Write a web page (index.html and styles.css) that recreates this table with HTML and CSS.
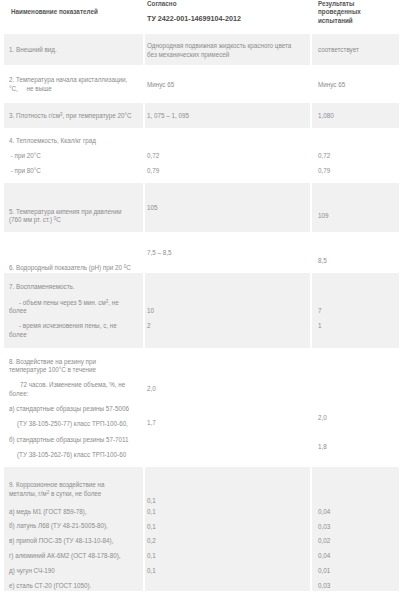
FILE: index.html
```html
<!DOCTYPE html>
<html lang="ru">
<head>
<meta charset="utf-8">
<title>Показатели</title>
<link rel="stylesheet" href="styles.css">
</head>
<body>
<table class="spec">
  <colgroup><col class="w1"><col class="w2"><col class="w3"></colgroup>
  <thead>
    <tr class="head">
      <th class="c1"><p>Наименование показателей</p></th>
      <th class="c2"><p>Согласно</p><p class="tu">ТУ 2422-001-14699104-2012</p></th>
      <th class="c3"><p>Результаты<br>проведенных<br>испытаний</p></th>
    </tr>
  </thead>
  <tbody>
    <tr class="r1 odd">
      <td class="c1"><p>1. Внешний вид.</p></td>
      <td class="c2"><p>Однородная подвижная жидкость красного цвета<br>без механических примесей</p></td>
      <td class="c3"><p>соответствует</p></td>
    </tr>
    <tr class="r2">
      <td class="c1"><p>2. Температура начала кристаллизации,<br>°С,&nbsp;&nbsp;&nbsp;&nbsp; не выше</p></td>
      <td class="c2"><p>Минус 65</p></td>
      <td class="c3"><p>Минус 65</p></td>
    </tr>
    <tr class="r3 odd">
      <td class="c1"><p>3. Плотность г/см<sup>3</sup>, при температуре 20°С</p></td>
      <td class="c2"><p>1, 075 – 1, 095</p></td>
      <td class="c3"><p>1,080</p></td>
    </tr>
    <tr class="r4">
      <td class="c1"><p>4. Теплоемкость, Ккал/кг град</p><p>&nbsp;- при 20°С</p><p>&nbsp;- при 80°С</p></td>
      <td class="c2"><p>&nbsp;</p><p>0,72</p><p>0,79</p></td>
      <td class="c3"><p>&nbsp;</p><p>0,72</p><p>0,79</p></td>
    </tr>
    <tr class="r5 odd">
      <td class="c1"><p>&nbsp;</p><p>5. Температура кипения при давлении<br>(760 мм рт. ст.) <sup>0</sup>С</p></td>
      <td class="c2"><p>105</p></td>
      <td class="c3"><p>&nbsp;</p><p>109</p></td>
    </tr>
    <tr class="r6">
      <td class="c1"><p>&nbsp;</p><p>&nbsp;</p><p>6. Водородный показатель (рН) при 20 <sup>0</sup>С</p></td>
      <td class="c2"><p>7,5 – 8,5</p></td>
      <td class="c3"><p>&nbsp;</p><p>8,5</p></td>
    </tr>
    <tr class="r7 odd">
      <td class="c1"><p>7. Воспламеняемость.</p><p class="ind">- объем пены через 5 мин. см<sup>3</sup>, не<br>более</p><p class="ind">- время исчезновения пены, с, не<br>более</p></td>
      <td class="c2"><p>&nbsp;</p><p>10</p><p>2</p></td>
      <td class="c3"><p>&nbsp;</p><p>7</p><p>1</p></td>
    </tr>
    <tr class="r8">
      <td class="c1"><p>8. Воздействие на резину при<br>температуре 100°С в течение</p><p class="ind-l">72 часов. Изменение объема, %, не<br>более:</p><p>а) стандартные образцы резины 57-5006</p><p class="ind-s">(ТУ 38-105-250-77) класс ТРП-100-60,</p><p>б) стандартные образцы резины 57-7011</p><p class="ind-s">(ТУ 38-105-262-76) класс ТРП-100-60</p></td>
      <td class="c2"><p>2,0</p><p>1,7</p></td>
      <td class="c3"><p>2,0</p><p>1,8</p></td>
    </tr>
    <tr class="r9 odd">
      <td class="c1"><p>9. Коррозионное воздействие на<br>металлы, г/м<sup>2</sup> в сутки, не более</p><p class="lead-gap">а) медь М1 (ГОСТ 859-78),</p><p>б) латунь Л68 (ТУ 48-21-5005-80),</p><p>в) припой ПОС-35 (ТУ 48-13-10-84),</p><p>г) алюминий АК-6М2 (ОСТ 48-178-80),</p><p>д) чугун СЧ-190</p><p>е) сталь СТ-20 (ГОСТ 1050).</p></td>
      <td class="c2"><p>0,1</p><p class="tight">0,1</p><p>0,1</p><p>0,2</p><p>0,1</p><p>0,1</p></td>
      <td class="c3"><p>0,04</p><p>0,03</p><p>0,02</p><p>0,04</p><p>0,01</p><p>0,03</p></td>
    </tr>
  </tbody>
</table>
</body>
</html>
```
FILE: styles.css
```css
* { box-sizing: border-box; }

body {
  margin: 0;
  background: #ffffff;
  font-family: "Liberation Sans", Arial, sans-serif;
}

.spec {
  margin: 0 0 0 4px;
  width: 395px;
  table-layout: fixed;
  border-collapse: separate;
  border-spacing: 0;
  font-size: 6.3px;
  line-height: 8.6px;
  color: #8c8c8c;
}

.w1 { width: 139px; }
.w2 { width: 167px; }
.w3 { width: 89px; }

.spec p {
  margin: 0;
  white-space: nowrap;
}

.spec p + p { margin-top: 6.6px; }

.spec sup {
  font-size: 70%;
  line-height: 0;
  vertical-align: 0.45em;
}

.spec th {
  vertical-align: top;
  text-align: left;
  font-weight: bold;
  color: #555555;
  line-height: 8.4px;
  padding: 0;
}

.spec td {
  vertical-align: middle;
  padding: 2px 0 0;
}

.spec .c2,
.spec .c3 { border-left: 2px solid #ffffff; }

.spec td.c1 { padding-left: 5px; }
.spec td.c2 { padding-left: 2px; }
.spec td.c3 { padding-left: 6px; }

.spec th.c1 { padding: 7.8px 0 0 7px; }
.spec th.c2 { padding: 0 0 0 2px; }
.spec th.c3 { padding: 0 0 0 6px; }

.spec th .tu {
  font-size: 7.2px;
  margin-top: 6.6px;
  color: #4a4a4a;
}

.odd td { background: #f1f1f1; }

.head { height: 34px; }
.r1 { height: 31px; }
.r2 { height: 38px; }
.r3 { height: 25px; }
.r4 { height: 55px; }
.r5 { height: 49px; }
.r6 { height: 40px; }
.r7 { height: 75px; }
.r8 { height: 119px; }
.r9 { height: 123px; }

.ind { text-indent: 10px; }
.ind-l { text-indent: 11px; }
.ind-s { text-indent: 8px; }

.spec .r8 td.c2 { vertical-align: top; padding-top: 37px; }
.spec .r8 .c2 p + p { margin-top: 25.8px; }
.spec .r8 td.c3 { vertical-align: top; padding-top: 66.4px; }
.spec .r8 .c3 p + p { margin-top: 19.7px; }

.spec .r9 td { vertical-align: top; }
.spec .r9 p + p { margin-top: 6.3px; }
.spec .r9 td.c1 { padding-top: 14px; }
.spec .r9 .c1 .lead-gap { margin-top: 9.4px; }
.spec .r9 td.c2 { padding-top: 29.7px; }
.spec .r9 .c2 .tight { margin-top: 2.4px; }
.spec .r9 td.c3 { padding-top: 40.7px; }
```
